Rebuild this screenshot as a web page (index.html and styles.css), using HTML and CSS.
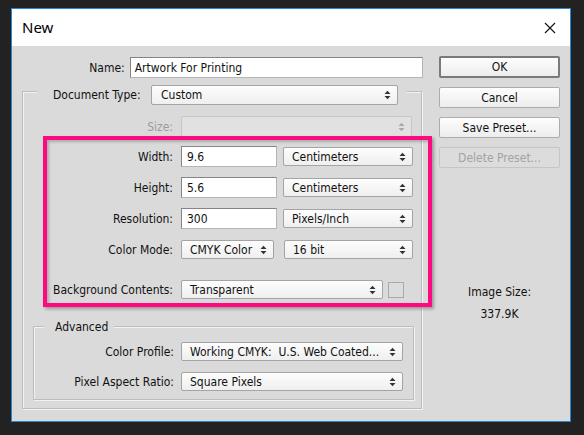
FILE: index.html
```html
<!DOCTYPE html>
<html>
<head>
<meta charset="utf-8">
<link rel="stylesheet" href="styles.css">
</head>
<body>
<div class="dialog">
  <div class="titlebar">
    <span class="title">New</span>
    <svg class="close" width="12" height="12" viewBox="0 0 12 12"><path d="M1 1 L11 11 M11 1 L1 11" stroke="#111" stroke-width="1.1" fill="none"/></svg>
  </div>
  <div class="content">
    <div class="left">
      <div class="row name-row">
        <span class="label name-label">Name:</span>
        <div class="input name-input">Artwork For Printing</div>
      </div>
      <div class="group outer-group">
        <div class="group-head doc-head">
          <span class="label doc-label">Document Type:</span>
          <div class="select doc-select"><span>Custom</span><svg class="arrows" width="7" height="10" viewBox="0 0 7 10"><path d="M0.5 4 L3.5 0.8 L6.5 4 Z M0.5 6 L3.5 9.2 L6.5 6 Z"/></svg></div>
        </div>
        <div class="row size-row">
          <span class="label col-label disabled-text">Size:</span>
          <div class="select disabled size-select"><span></span><svg class="arrows" width="7" height="10" viewBox="0 0 7 10"><path d="M0.5 4 L3.5 0.8 L6.5 4 Z M0.5 6 L3.5 9.2 L6.5 6 Z"/></svg></div>
        </div>
        <div class="row r-width">
          <span class="label col-label">Width:</span>
          <div class="input num-input">9.6</div>
          <div class="select unit-select"><span>Centimeters</span><svg class="arrows" width="7" height="10" viewBox="0 0 7 10"><path d="M0.5 4 L3.5 0.8 L6.5 4 Z M0.5 6 L3.5 9.2 L6.5 6 Z"/></svg></div>
        </div>
        <div class="row r-next">
          <span class="label col-label">Height:</span>
          <div class="input num-input">5.6</div>
          <div class="select unit-select"><span>Centimeters</span><svg class="arrows" width="7" height="10" viewBox="0 0 7 10"><path d="M0.5 4 L3.5 0.8 L6.5 4 Z M0.5 6 L3.5 9.2 L6.5 6 Z"/></svg></div>
        </div>
        <div class="row r-next">
          <span class="label col-label">Resolution:</span>
          <div class="input num-input">300</div>
          <div class="select unit-select"><span>Pixels/Inch</span><svg class="arrows" width="7" height="10" viewBox="0 0 7 10"><path d="M0.5 4 L3.5 0.8 L6.5 4 Z M0.5 6 L3.5 9.2 L6.5 6 Z"/></svg></div>
        </div>
        <div class="row r-next">
          <span class="label col-label">Color Mode:</span>
          <div class="select mode-select"><span>CMYK Color</span><svg class="arrows" width="7" height="10" viewBox="0 0 7 10"><path d="M0.5 4 L3.5 0.8 L6.5 4 Z M0.5 6 L3.5 9.2 L6.5 6 Z"/></svg></div>
          <div class="select bit-select"><span>16 bit</span><svg class="arrows" width="7" height="10" viewBox="0 0 7 10"><path d="M0.5 4 L3.5 0.8 L6.5 4 Z M0.5 6 L3.5 9.2 L6.5 6 Z"/></svg></div>
        </div>
        <div class="row r-bg">
          <span class="label col-label">Background Contents:</span>
          <div class="select bg-select"><span>Transparent</span><svg class="arrows" width="7" height="10" viewBox="0 0 7 10"><path d="M0.5 4 L3.5 0.8 L6.5 4 Z M0.5 6 L3.5 9.2 L6.5 6 Z"/></svg></div>
          <div class="swatch"></div>
        </div>
        <div class="group adv-group">
          <div class="group-head adv-head"><span class="label">Advanced</span></div>
          <div class="row r-profile">
            <span class="label adv-label">Color Profile:</span>
            <div class="select adv-select"><span>Working CMYK:&nbsp; U.S. Web Coated...</span><svg class="arrows" width="7" height="10" viewBox="0 0 7 10"><path d="M0.5 4 L3.5 0.8 L6.5 4 Z M0.5 6 L3.5 9.2 L6.5 6 Z"/></svg></div>
          </div>
          <div class="row r-aspect">
            <span class="label adv-label">Pixel Aspect Ratio:</span>
            <div class="select adv-select"><span>Square Pixels</span><svg class="arrows" width="7" height="10" viewBox="0 0 7 10"><path d="M0.5 4 L3.5 0.8 L6.5 4 Z M0.5 6 L3.5 9.2 L6.5 6 Z"/></svg></div>
          </div>
        </div>
      </div>
    </div>
    <div class="right">
      <div class="btn btn-default">OK</div>
      <div class="btn">Cancel</div>
      <div class="btn">Save Preset...</div>
      <div class="btn btn-disabled">Delete Preset...</div>
      <div class="image-size">
        <span>Image Size:</span>
        <span>337.9K</span>
      </div>
    </div>
    <div class="highlight"></div>
  </div>
</div>
</body>
</html>
```

FILE: styles.css
```css
* { box-sizing: border-box; }
html, body { margin: 0; padding: 0; }
body {
  width: 584px;
  height: 435px;
  overflow: hidden;
  background: #222222;
  font-family: "DejaVu Sans Condensed", "DejaVu Sans", sans-serif;
  font-size: 12px;
  color: #111;
}
.dialog {
  margin: 8px 0 0 11px;
  width: 560px;
  height: 414px;
  border: 1px solid #2a86d4;
  display: flex;
  flex-direction: column;
  background: #dadada;
}
.titlebar {
  height: 37px;
  background: #ffffff;
  display: flex;
  align-items: center;
  justify-content: space-between;
  padding: 0 14px 0 10px;
  flex: none;
}
.title {
  font-family: "Noto Sans", sans-serif;
  font-size: 15px;
  color: #000;
  margin-top: -1px;
}
.close { display: block; margin-top: 1px; }
.content {
  position: relative;
  flex: 1;
  display: flex;
  padding: 10px 0 0 10px;
}
.left {
  width: 401px;
  display: flex;
  flex-direction: column;
}
.row {
  display: flex;
  align-items: center;
  height: 21px;
  flex: none;
}
.label { white-space: nowrap; }
.name-row { margin-top: 1px; gap: 5px; }
.name-label { width: 103px; text-align: right; }
.input {
  height: 21px;
  background: #ffffff;
  border: 1px solid #858585;
  border-right-color: #b5b5b5;
  border-bottom-color: #b5b5b5;
  padding: 0 5px;
  display: flex;
  align-items: center;
  white-space: nowrap;
}
.name-input { width: 294px; padding-left: 4px; }
.select {
  height: 19px;
  border: 1px solid #a4a4a4;
  border-radius: 2px;
  background: linear-gradient(#fdfdfd, #efefef);
  display: flex;
  align-items: center;
  justify-content: space-between;
  padding: 0 6px 0 8px;
  white-space: nowrap;
  overflow: hidden;
}
.select .arrows { flex: none; fill: #333; }
.select.disabled {
  background: #e1e1e1;
  border-color: #c6c6c6;
}
.select.disabled .arrows { fill: #a8a8a8; }
.disabled-text { color: #9c9c9c; }

.group {
  border: 1px solid #bdbdbd;
  box-shadow: inset 1px 1px 0 #f2f2f2, 1px 1px 0 #f2f2f2;
  flex: none;
}
.outer-group {
  margin-top: 13px;
  width: 400px;
  height: 318px;
  display: flex;
  flex-direction: column;
}
.group-head {
  display: flex;
  align-items: center;
  background: #dadada;
  align-self: flex-start;
  flex: none;
}
.doc-head {
  margin: -8px 0 0 14px;
  padding: 0 8px 0 16px;
  height: 21px;
  gap: 6px;
}
.doc-label { width: 92px; }
.doc-select { width: 247px; height: 20px; padding-left: 9px; }
.col-label { width: 150px; text-align: right; margin-right: 8px; }
.size-row { margin-top: 11px; }
.size-select { width: 231px; height: 21px; }
.r-width { margin-top: 9px; }
.r-next { margin-top: 10px; }
.num-input { width: 96px; margin-right: 6px; }
.unit-select { width: 130px; }
.mode-select { width: 93px; margin-right: 10px; }
.bit-select { width: 129px; }
.r-bg { margin-top: 19px; }
.bg-select { width: 202px; margin-right: 5px; }
.swatch {
  width: 16px;
  height: 16px;
  border: 1px solid #a9a9a9;
  background: #dcdcdc;
}
.adv-group {
  margin: 26px 0 0 10px;
  width: 381px;
  height: 74px;
  display: flex;
  flex-direction: column;
}
.adv-head {
  margin: -8px 0 0 10px;
  padding: 0 6px 0 11px;
  height: 15px;
}
.r-profile { margin-top: 7px; }
.r-aspect { margin-top: 9px; }
.adv-label { width: 140px; text-align: right; margin-right: 7px; }
.adv-select { width: 222px; }

.right {
  margin-left: 16px;
  width: 121px;
  display: flex;
  flex-direction: column;
  gap: 9px;
}
.btn {
  height: 21px;
  border: 1px solid #acacac;
  border-radius: 2px;
  background: linear-gradient(#fdfdfd, #ededed);
  display: flex;
  align-items: center;
  justify-content: center;
  white-space: nowrap;
  flex: none;
}
.btn-default {
  height: 22px;
  border: 2px solid #7a7a7a;
}
.btn-disabled {
  color: #a3a3a3;
  border-color: #c5c5c5;
  background: #dcdcdc;
}
.image-size {
  margin-top: 108px;
  display: flex;
  flex-direction: column;
  align-items: center;
  gap: 7px;
  line-height: 15px;
}
.highlight {
  position: absolute;
  left: 31px;
  top: 90px;
  width: 389px;
  height: 171px;
  border: 4px solid #fe0a80;
  box-shadow: 2px 2px 3px rgba(0,0,0,0.3), inset 2px 2px 3px rgba(0,0,0,0.22);
  pointer-events: none;
}
```
